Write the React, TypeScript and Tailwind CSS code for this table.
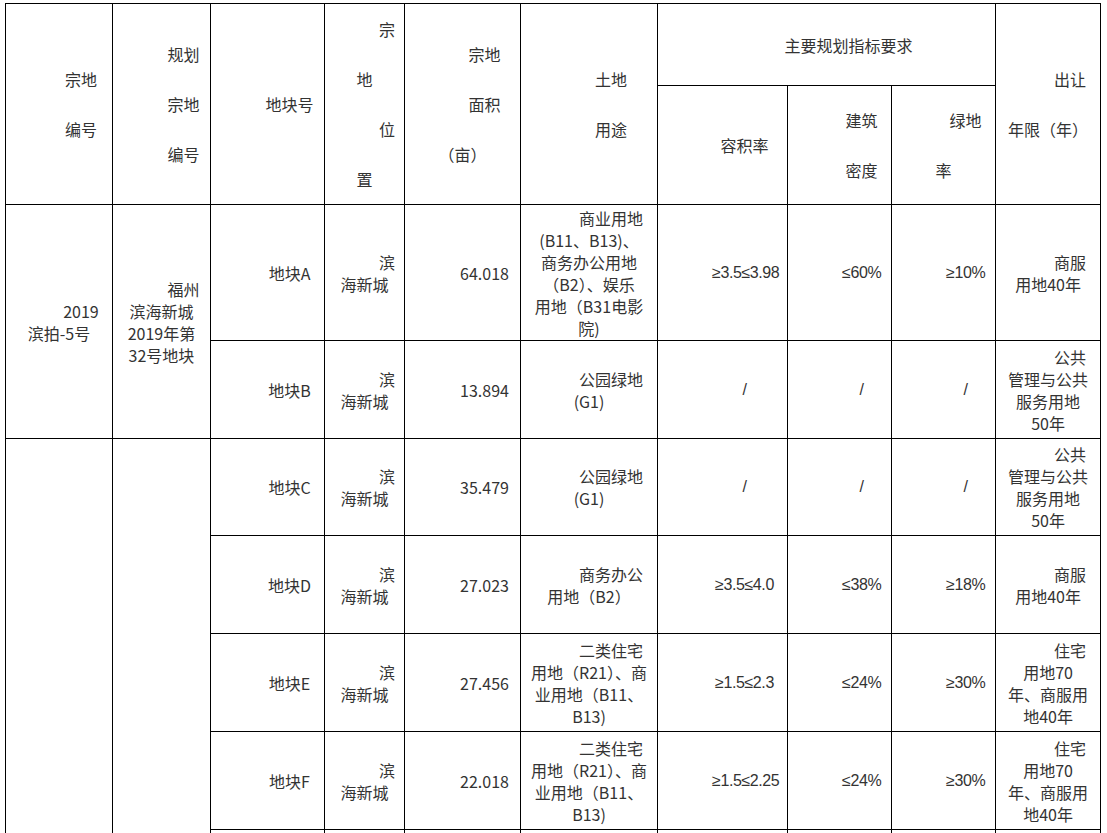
import React from 'react';

interface PlotRow {
  id: string;
  area: string;
  use: string[];
  far: string;
  density: string;
  green: string;
  term: string[];
  h: string;
}

const rows: PlotRow[] = [
  {
    id: '地块A',
    area: '64.018',
    use: ['商业用地', '(B11、B13)、', '商务办公用地', '（B2）、娱乐', '用地（B31电影', '院)'],
    far: '≥3.5≤3.98',
    density: '≤60%',
    green: '≥10%',
    term: ['商服', '用地40年'],
    h: 'h-[136px]',
  },
  {
    id: '地块B',
    area: '13.894',
    use: ['公园绿地', '(G1)'],
    far: '/',
    density: '/',
    green: '/',
    term: ['公共', '管理与公共', '服务用地', '50年'],
    h: 'h-[98px]',
  },
  {
    id: '地块C',
    area: '35.479',
    use: ['公园绿地', '(G1)'],
    far: '/',
    density: '/',
    green: '/',
    term: ['公共', '管理与公共', '服务用地', '50年'],
    h: 'h-[97px]',
  },
  {
    id: '地块D',
    area: '27.023',
    use: ['商务办公', '用地（B2）'],
    far: '≥3.5≤4.0',
    density: '≤38%',
    green: '≥18%',
    term: ['商服', '用地40年'],
    h: 'h-[98px]',
  },
  {
    id: '地块E',
    area: '27.456',
    use: ['二类住宅', '用地（R21）、商', '业用地（B11、', 'B13)'],
    far: '≥1.5≤2.3',
    density: '≤24%',
    green: '≥30%',
    term: ['住宅', '用地70', '年、商服用', '地40年'],
    h: 'h-[98px]',
  },
  {
    id: '地块F',
    area: '22.018',
    use: ['二类住宅', '用地（R21）、商', '业用地（B11、', 'B13)'],
    far: '≥1.5≤2.25',
    density: '≤24%',
    green: '≥30%',
    term: ['住宅', '用地70', '年、商服用', '地40年'],
    h: 'h-[98px]',
  },
];

// 单元格：首行缩进 + 居中，与原文档排版一致
const Lines = ({ lines, math }: { lines: string[]; math?: boolean }) => (
  <div
    className={`indent-[44px] whitespace-nowrap ${
      math ? "font-['Liberation_Sans',sans-serif] tracking-[-0.4px]" : ''
    }`}
  >
    {lines.map((l, i) => (
      <React.Fragment key={i}>
        {i > 0 && <br />}
        {l}
      </React.Fragment>
    ))}
  </div>
);

const td = 'border border-black px-[10px] py-0 text-center align-middle';
const th = 'border border-black px-[10px] py-0 text-center align-middle font-normal leading-[50px]';

export default function App() {
  return (
    <div
      className="h-[833px] w-[1107px] overflow-hidden bg-white text-[16px] text-[#333]"
      style={{ fontFamily: '"Microsoft YaHei", "Noto Sans CJK SC", sans-serif' }}
    >
      <table className="ml-[5px] mt-[3px] w-[1095px] table-fixed border-collapse">
        <colgroup>
          <col className="w-[107px]" />
          <col className="w-[98px]" />
          <col className="w-[114px]" />
          <col className="w-[80px]" />
          <col className="w-[116px]" />
          <col className="w-[137px]" />
          <col className="w-[130px]" />
          <col className="w-[104px]" />
          <col className="w-[104px]" />
          <col className="w-[105px]" />
        </colgroup>
        <thead>
          <tr className="h-[82px]">
            <th rowSpan={2} className={th}>
              <p className="indent-[44px]">宗地</p>
              <p className="indent-[44px]">编号</p>
            </th>
            <th rowSpan={2} className={th}>
              <p className="indent-[44px]">规划</p>
              <p className="indent-[44px]">宗地</p>
              <p className="indent-[44px]">编号</p>
            </th>
            <th rowSpan={2} className={th}>
              <p className="indent-[44px]">地块号</p>
            </th>
            <th rowSpan={2} className={th}>
              <p className="indent-[44px]">
                宗<br />地
              </p>
              <p className="indent-[44px]">
                位<br />置
              </p>
            </th>
            <th rowSpan={2} className={th}>
              <p className="indent-[44px]">宗地</p>
              <p className="indent-[44px]">面积</p>
              <p className="whitespace-nowrap">（亩）</p>
            </th>
            <th rowSpan={2} className={th}>
              <p className="indent-[44px]">土地</p>
              <p className="indent-[44px]">用途</p>
            </th>
            <th colSpan={3} className={th}>
              <p className="indent-[44px]">主要规划指标要求</p>
            </th>
            <th rowSpan={2} className={th}>
              <p className="indent-[44px]">出让</p>
              <p className="whitespace-nowrap">年限（年）</p>
            </th>
          </tr>
          <tr className="h-[118px]">
            <th className={th}>
              <p className="indent-[44px]">容积率</p>
            </th>
            <th className={th}>
              <p className="indent-[44px]">建筑</p>
              <p className="indent-[44px]">密度</p>
            </th>
            <th className={th}>
              <p className="indent-[44px]">
                绿地<br />率
              </p>
            </th>
          </tr>
        </thead>
        <tbody className="leading-[22px]">
          {rows.map((r, i) => (
            <tr key={r.id} className={r.h}>
              {i === 0 && (
                <>
                  <td rowSpan={2} className={td}>
                    <Lines lines={['2019', '滨拍-5号']} />
                  </td>
                  <td rowSpan={2} className={td}>
                    <Lines lines={['福州', '滨海新城', '2019年第', '32号地块']} />
                  </td>
                </>
              )}
              {i === 2 && (
                <>
                  <td rowSpan={6} className={td}></td>
                  <td rowSpan={6} className={td}></td>
                </>
              )}
              <td className={td}>
                <Lines lines={[r.id]} />
              </td>
              <td className={td}>
                <Lines lines={['滨', '海新城']} />
              </td>
              <td className={td}>
                <Lines lines={[r.area]} />
              </td>
              <td className={td}>
                <Lines lines={r.use} />
              </td>
              <td className={td}>
                <Lines lines={[r.far]} math />
              </td>
              <td className={td}>
                <Lines lines={[r.density]} math />
              </td>
              <td className={td}>
                <Lines lines={[r.green]} math />
              </td>
              <td className={td}>
                <Lines lines={r.term} />
              </td>
            </tr>
          ))}
          <tr className="h-[98px]">
            <td className={td}></td>
            <td className={td}></td>
            <td className={td}></td>
            <td className={td}></td>
            <td className={td}></td>
            <td className={td}></td>
            <td className={td}></td>
            <td className={td}></td>
          </tr>
        </tbody>
      </table>
    </div>
  );
}
